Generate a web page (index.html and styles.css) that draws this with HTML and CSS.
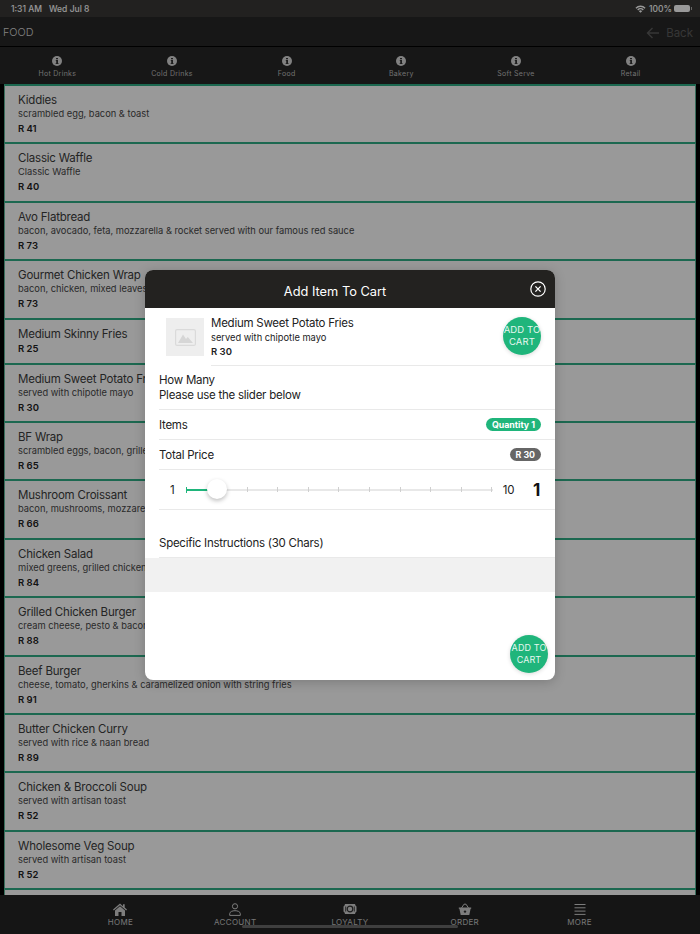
FILE: index.html
```html
<!DOCTYPE html>
<html>
<head>
  <title>Food</title>
  <link rel="stylesheet" href="styles.css">
</head>
<body>
  <svg class="defs" width="0" height="0">
    <symbol id="info" viewBox="0 0 10 10">
      <circle cx="5" cy="5" r="5" fill="#d8d8d8"/>
      <path d="M4 2h2v1.3H4zM3.8 4.1h2.2v3.1h.6v.9H3.6v-.9h.6V5h-.4z" fill="#333"/>
    </symbol>
  </svg>
  <div class="app">
    <div class="statusbar">
      <span class="time">1:31 AM</span>
      <span class="date">Wed Jul 8</span>
      <span class="status-right">
        <svg width="11" height="8" viewBox="0 0 12 9"><path d="M0.300 3A8 8 0 0 1 11.700 3L10.600 4.100A6.400 6.400 0 0 0 1.400 4.100ZM2.300 5A5.200 5.200 0 0 1 9.700 5L8.600 6.100A3.600 3.600 0 0 0 3.400 6.100ZM4.200 6.900A2.600 2.600 0 0 1 7.800 6.900L6 8.800Z" fill="#fff"/></svg>
        <span class="percent">100%</span>
        <span class="battery"></span>
      </span>
    </div>
    <div class="topbar">
      <span class="page-title">FOOD</span>
      <span class="back">
        <svg width="14" height="12" viewBox="0 0 14 12"><path d="M13 6H1.500M6.500 1 1.500 6l5 5" fill="none" stroke="currentColor" stroke-width="1.400"/></svg>
        <span>Back</span>
      </span>
    </div>
    <div class="cats">
      <div class="cat"><svg width="10" height="10"><use href="#info"/></svg><span>Hot Drinks</span></div>
      <div class="cat"><svg width="10" height="10"><use href="#info"/></svg><span>Cold Drinks</span></div>
      <div class="cat"><svg width="10" height="10"><use href="#info"/></svg><span>Food</span></div>
      <div class="cat"><svg width="10" height="10"><use href="#info"/></svg><span>Bakery</span></div>
      <div class="cat"><svg width="10" height="10"><use href="#info"/></svg><span>Soft Serve</span></div>
      <div class="cat"><svg width="10" height="10"><use href="#info"/></svg><span>Retail</span></div>
    </div>
    <div class="list">
      <div class="item"><div class="item-name">Kiddies</div><div class="item-desc">scrambled egg, bacon &amp; toast</div><div class="item-price">R 41</div></div>
      <div class="item"><div class="item-name">Classic Waffle</div><div class="item-desc">Classic Waffle</div><div class="item-price">R 40</div></div>
      <div class="item"><div class="item-name">Avo Flatbread</div><div class="item-desc">bacon, avocado, feta, mozzarella &amp; rocket served with our famous red sauce</div><div class="item-price">R 73</div></div>
      <div class="item"><div class="item-name">Gourmet Chicken Wrap</div><div class="item-desc">bacon, chicken, mixed leaves</div><div class="item-price">R 73</div></div>
      <div class="item item-short"><div class="item-name">Medium Skinny Fries</div><div class="item-price">R 25</div></div>
      <div class="item"><div class="item-name">Medium Sweet Potato Fries</div><div class="item-desc">served with chipotle mayo</div><div class="item-price">R 30</div></div>
      <div class="item"><div class="item-name">BF Wrap</div><div class="item-desc">scrambled eggs, bacon, grilled</div><div class="item-price">R 65</div></div>
      <div class="item"><div class="item-name">Mushroom Croissant</div><div class="item-desc">bacon, mushrooms, mozzarella</div><div class="item-price">R 66</div></div>
      <div class="item"><div class="item-name">Chicken Salad</div><div class="item-desc">mixed greens, grilled chicken</div><div class="item-price">R 84</div></div>
      <div class="item"><div class="item-name">Grilled Chicken Burger</div><div class="item-desc">cream cheese, pesto &amp; bacon</div><div class="item-price">R 88</div></div>
      <div class="item"><div class="item-name">Beef Burger</div><div class="item-desc">cheese, tomato, gherkins &amp; caramelized onion with string fries</div><div class="item-price">R 91</div></div>
      <div class="item"><div class="item-name">Butter Chicken Curry</div><div class="item-desc">served with rice &amp; naan bread</div><div class="item-price">R 89</div></div>
      <div class="item"><div class="item-name">Chicken &amp; Broccoli Soup</div><div class="item-desc">served with artisan toast</div><div class="item-price">R 52</div></div>
      <div class="item"><div class="item-name">Wholesome Veg Soup</div><div class="item-desc">served with artisan toast</div><div class="item-price">R 52</div></div>
      <div class="item"></div>
    </div>
    <div class="tabbar">
      <div class="tab">
        <svg width="14" height="13" viewBox="0 0 14 13"><path d="M7 .5 0 6.600l.8.9L7 2.200l6.200 5.300.8-.9-2.300-2V1.200H10v2.100zM2 7.500 7 3.300l5 4.200V13H8.500V9h-3v4H2z" fill="#d0d0d0"/></svg>
        <span>HOME</span>
      </div>
      <div class="tab">
        <svg width="14" height="13" viewBox="0 0 14 13"><circle cx="7" cy="3.300" r="2.600" fill="none" stroke="#d0d0d0" stroke-width="1"/><path d="M1.700 12.400V10.800C1.700 8.600 4.500 7.700 7 7.700s5.300.9 5.300 3.100v1.600z" fill="none" stroke="#d0d0d0" stroke-width="1"/></svg>
        <span>ACCOUNT</span>
      </div>
      <div class="tab">
        <svg width="14" height="13" viewBox="0 0 14 13"><path d="M2 1h10l.5 1.500 1 1v5l-1 1L12 11H2l-.5-1.500-1-1v-5l1-1z" fill="#d0d0d0"/><circle cx="7" cy="6" r="2.800" fill="none" stroke="#333" stroke-width="1.200"/><path d="M2.700 3.500v5M11.300 3.500v5" stroke="#333" stroke-width=".9"/></svg>
        <span>LOYALTY</span>
      </div>
      <div class="tab">
        <svg width="14" height="13" viewBox="0 0 14 13"><path d="M3.500 5 6 1.200h2L10.500 5" fill="none" stroke="#d0d0d0" stroke-width="1"/><path d="M.8 4.600h12.400v1.200h-.6L11.300 12H2.700L1.400 5.800H.8z" fill="#d0d0d0"/><circle cx="7" cy="8.600" r="1.200" fill="#333"/></svg>
        <span>ORDER</span>
      </div>
      <div class="tab">
        <svg width="14" height="13" viewBox="0 0 14 13"><path d="M1.500 1.500h11M1.500 4.800h11M1.500 8.100h11M1.500 11.400h11" stroke="#d0d0d0" stroke-width="1"/></svg>
        <span>MORE</span>
      </div>
    </div>
    <div class="home-indicator"></div>

    <div class="overlay">
      <div class="modal">
        <div class="modal-head">
          <span class="modal-title">Add Item To Cart</span>
          <svg class="modal-close" width="16" height="16" viewBox="0 0 16 16"><circle cx="8" cy="8" r="7.200" fill="none" stroke="#fff" stroke-width="1.200"/><path d="M5.400 5.400l5.200 5.200M10.600 5.400l-5.200 5.200" stroke="#fff" stroke-width="1.300"/></svg>
        </div>
        <div class="product">
          <div class="thumb">
            <svg width="21" height="17" viewBox="0 0 21 17"><rect x=".6" y=".6" width="19.800" height="15.800" rx="1.500" fill="none" stroke="#dadada" stroke-width="1.200"/><path d="M3 14 8 5.500l3 4.500 1.800-2L18 14z" fill="#d6d6d6"/></svg>
          </div>
          <div class="product-info">
            <div class="product-name">Medium Sweet Potato Fries</div>
            <div class="product-desc">served with chipotle mayo</div>
            <div class="product-price">R 30</div>
          </div>
          <div class="fab fab-top">ADD TO<br>CART</div>
        </div>
        <div class="how-many">How Many<br>Please use the slider below</div>
        <div class="line">
          <span>Items</span>
          <span class="badge badge-green">Quantity 1</span>
        </div>
        <div class="line">
          <span>Total Price</span>
          <span class="badge badge-gray">R 30</span>
        </div>
        <div class="slider-row">
          <span class="slider-min">1</span>
          <div class="slider">
            <div class="ticks"><i></i><i></i><i></i><i></i><i></i><i></i><i></i><i></i><i></i><i></i><i></i></div>
            <div class="slider-fill"></div>
            <div class="slider-thumb"></div>
          </div>
          <span class="slider-max">10</span>
          <span class="slider-value">1</span>
        </div>
        <div class="instructions-label">Specific Instructions (30 Chars)</div>
        <div class="instructions-input"></div>
        <div class="fab fab-bottom">ADD TO<br>CART</div>
      </div>
    </div>
  </div>
</body>
</html>
```

FILE: styles.css
```css
body {
  margin: 0;
  font-family: Inter, "Liberation Sans", sans-serif;
  background: #000;
}
.defs {
  position: absolute;
}
.app {
  position: relative;
  width: 700px;
  height: 934px;
  overflow: hidden;
  display: flex;
  flex-direction: column;
}

.statusbar {
  height: 17px;
  flex: none;
  box-sizing: border-box;
  padding: 0 10px 0 11px;
  display: flex;
  align-items: center;
  gap: 7px;
  background: #393836;
  color: #fff;
  font-size: 8.500px;
  font-weight: 500;
}
.status-right {
  margin-left: auto;
  display: flex;
  align-items: center;
  gap: 2px;
}
.percent {
  margin-left: 1px;
}
.battery {
  position: relative;
  width: 16px;
  height: 7px;
  border-radius: 2px;
  background: #fff;
  display: block;
}
.battery::after {
  content: "";
  position: absolute;
  right: -2px;
  top: 2px;
  width: 1px;
  height: 3px;
  background: #aaa;
}

.topbar {
  height: 30px;
  flex: none;
  box-sizing: border-box;
  border-bottom: 1px solid #000;
  padding: 2px 7px 0 3px;
  display: flex;
  align-items: center;
  justify-content: space-between;
  background: #272727;
}
.page-title {
  color: #d8d8d8;
  font-size: 10.800px;
  font-weight: 300;
}
.back {
  display: flex;
  align-items: center;
  gap: 6px;
  color: #5c5c5c;
  font-size: 11.500px;
}

.cats {
  height: 37px;
  flex: none;
  box-sizing: border-box;
  padding: 9px 12px 0 0;
  display: grid;
  grid-template-columns: repeat(6, 1fr);
  background: #272727;
}
.cat {
  display: flex;
  flex-direction: column;
  align-items: center;
  gap: 3px;
  color: #bdbdbd;
  font-size: 7px;
  letter-spacing: .3px;
}

.list {
  flex: 1;
  min-height: 0;
  overflow: hidden;
  padding: 0 4px;
  background: #000;
}
.item {
  height: 58.400px;
  box-sizing: border-box;
  padding: 7px 13px 0;
  background: #fff;
  border-left: 1px solid #5fb89a;
  border-right: 1px solid #5fb89a;
  border-top: 2px solid #2fae85;
  color: #333;
}
.item-short {
  height: 45px;
}
.item-name {
  font-size: 11.500px;
  line-height: 14px;
  letter-spacing: -.2px;
  color: #3c3c3c;
}
.item-desc {
  font-size: 9.300px;
  line-height: 14px;
  color: #484848;
}
.item-price {
  font-size: 9.500px;
  line-height: 15px;
  font-weight: 600;
  color: #222;
}

.tabbar {
  height: 39px;
  flex: none;
  padding: 0 63px;
  display: grid;
  grid-template-columns: repeat(5, 1fr);
  background: #232323;
}
.tab {
  padding-top: 8px;
  display: flex;
  flex-direction: column;
  align-items: center;
  gap: 1px;
  color: #c4c4c4;
  font-size: 8px;
  letter-spacing: .3px;
}
.home-indicator {
  position: absolute;
  left: 242px;
  bottom: 6px;
  width: 216px;
  height: 3px;
  border-radius: 2px;
  background: #6a6a6a;
}

.overlay {
  position: absolute;
  inset: 0;
  padding-top: 16px;
  box-sizing: border-box;
  display: flex;
  align-items: center;
  justify-content: center;
  background: rgba(0, 0, 0, .4);
}
.modal {
  position: relative;
  width: 410px;
  height: 410px;
  border-radius: 8px;
  overflow: hidden;
  background: #fff;
  color: #222;
  display: flex;
  flex-direction: column;
  font-size: 11.500px;
  letter-spacing: -.25px;
  box-shadow: 0 2px 12px rgba(0, 0, 0, .2);
}
.modal-head {
  height: 38px;
  flex: none;
  position: relative;
  display: flex;
  align-items: center;
  justify-content: center;
  padding: 5px 30px 0 0;
  box-sizing: border-box;
  background: #232220;
  color: #fff;
}
.modal-title {
  font-size: 12.800px;
  font-weight: 400;
  letter-spacing: 0;
}
.modal-close {
  position: absolute;
  right: 9px;
  top: 11px;
}

.product {
  height: 58px;
  flex: none;
  box-sizing: border-box;
  margin-left: 66px;
  padding-right: 14px;
  border-bottom: 1px solid #e9e9e9;
  display: flex;
  align-items: center;
  position: relative;
}
.thumb {
  position: absolute;
  left: -45px;
  top: 10px;
  width: 38px;
  height: 38px;
  background: #eeeeee;
  display: flex;
  align-items: center;
  justify-content: center;
}
.product-info {
  flex: 1;
  padding-top: 1px;
}
.product-name {
  font-size: 11.500px;
  line-height: 15px;
}
.product-desc {
  font-size: 9.300px;
  line-height: 14px;
  letter-spacing: 0;
}
.product-price {
  font-size: 9.500px;
  line-height: 14px;
  font-weight: 600;
  letter-spacing: 0;
}
.fab {
  width: 38px;
  height: 38px;
  border-radius: 50%;
  background: #1fb57b;
  color: #e6f7f0;
  font-size: 9px;
  letter-spacing: .1px;
  line-height: 12px;
  text-align: center;
  display: flex;
  align-items: center;
  justify-content: center;
  white-space: nowrap;
  box-shadow: 0 1px 4px rgba(0, 0, 0, .15);
}
.fab-top {
  font-size: 9.500px;
  margin-top: -1px;
}
.fab-bottom {
  position: absolute;
  right: 7px;
  bottom: 7px;
}

.how-many {
  height: 44px;
  flex: none;
  box-sizing: border-box;
  margin-left: 14px;
  padding-top: 7px;
  line-height: 15px;
  border-bottom: 1px solid #e9e9e9;
}
.line {
  height: 30px;
  flex: none;
  box-sizing: border-box;
  margin-left: 14px;
  padding-right: 14px;
  border-bottom: 1px solid #e9e9e9;
  display: flex;
  align-items: center;
  justify-content: space-between;
}
.badge {
  height: 13px;
  padding: 0 6px;
  border-radius: 7px;
  color: #fff;
  font-size: 8.800px;
  font-weight: 700;
  letter-spacing: 0;
  line-height: 13px;
}
.badge-green {
  background: #1fb57b;
}
.badge-gray {
  background: #666;
}

.slider-row {
  height: 40px;
  flex: none;
  box-sizing: border-box;
  margin-left: 14px;
  border-bottom: 1px solid #e9e9e9;
  display: flex;
  align-items: center;
  position: relative;
}
.slider-min {
  width: 26.500px;
  text-align: center;
}
.slider {
  position: relative;
  width: 307px;
  height: 7px;
}
.ticks {
  position: absolute;
  inset: 0;
  display: flex;
  justify-content: space-between;
  align-items: center;
}
.ticks::before {
  content: "";
  position: absolute;
  left: 0;
  right: 0;
  top: 3px;
  height: 2px;
  background: #e8e8e8;
}
.ticks i {
  width: 1px;
  height: 5px;
  background: #cfcfcf;
  position: relative;
}
.ticks i:nth-child(2) {
  visibility: hidden;
}
.slider-fill {
  position: absolute;
  left: 0;
  top: 3px;
  width: 22px;
  height: 2px;
  background: #1fb57b;
}
.slider-fill::before {
  content: "";
  position: absolute;
  left: 0;
  top: -2px;
  width: 1px;
  height: 6px;
  background: #1fb57b;
}
.slider-thumb {
  position: absolute;
  left: 21px;
  top: -7px;
  width: 20px;
  height: 20px;
  border-radius: 50%;
  background: #fff;
  box-shadow: 0 2px 4px rgba(0, 0, 0, .25);
}
.slider-max {
  width: 32px;
  text-align: center;
}
.slider-value {
  font-size: 17px;
  font-weight: 700;
  color: #111;
  width: 24px;
  text-align: center;
}

.instructions-label {
  height: 48px;
  flex: none;
  box-sizing: border-box;
  margin-left: 14px;
  padding-top: 26px;
  line-height: 15px;
  border-bottom: 1px solid #e9e9e9;
}
.instructions-input {
  height: 34px;
  flex: none;
  background: #f1f1f1;
}
```
